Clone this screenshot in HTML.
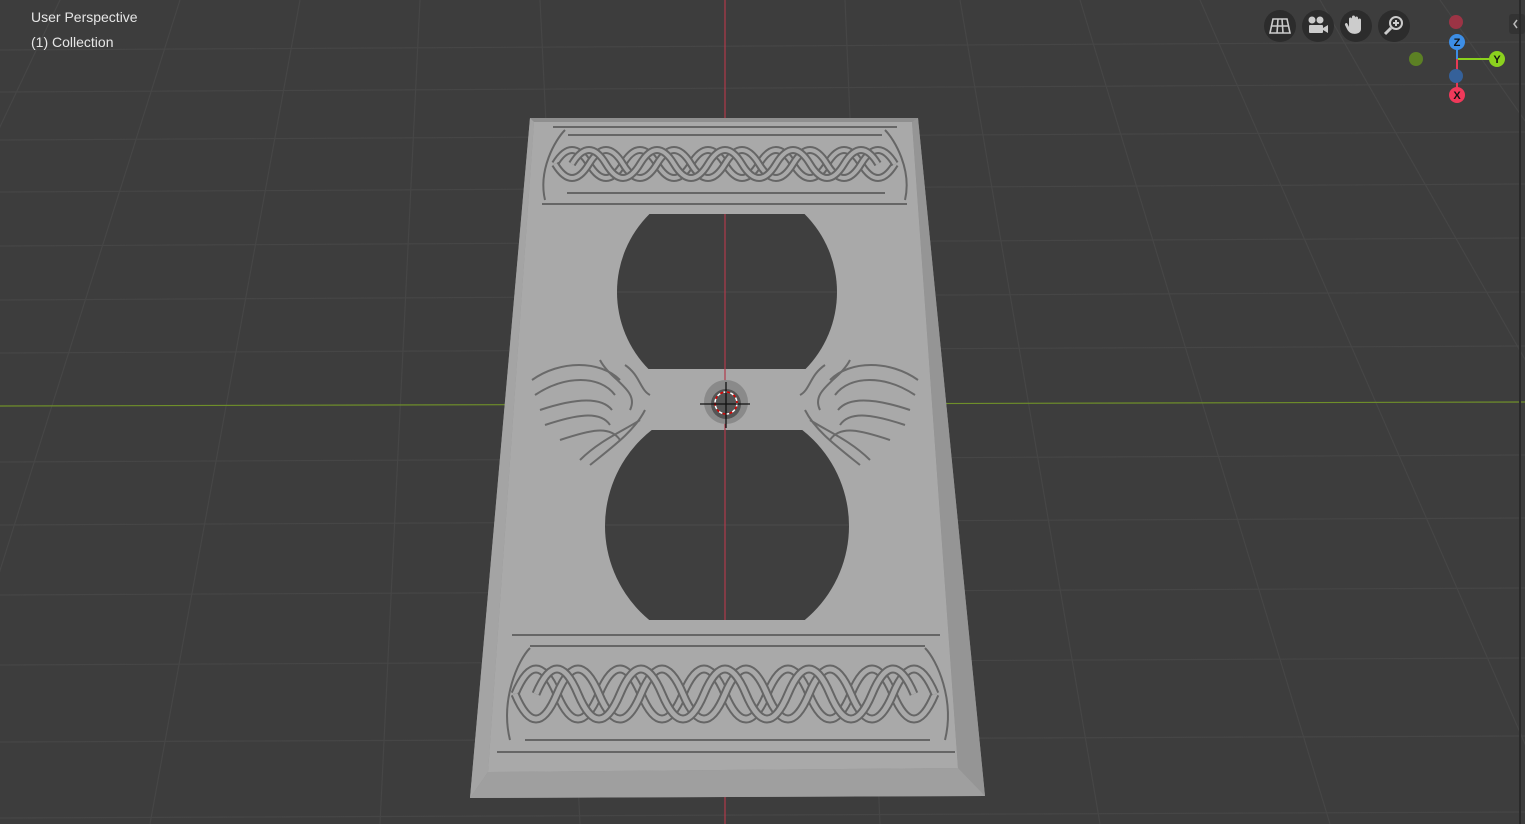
<!DOCTYPE html>
<html><head><meta charset="utf-8"><style>
html,body{margin:0;padding:0;width:1525px;height:824px;overflow:hidden;background:#3d3d3d;font-family:"Liberation Sans",sans-serif}
.t{position:absolute;left:31px;color:#e6e6e6;font-size:14px}
</style></head><body>
<svg width="1525" height="824" style="position:absolute;left:0;top:0">
<defs>
<path id="ta" d="M555 164 Q572 136 589 164 T623 164 T657 164 T691 164 T725 164 T759 164 T793 164 T827 164 T861 164 T895 164"/>
<path id="tb" d="M555 164 Q572 192 589 164 T623 164 T657 164 T691 164 T725 164 T759 164 T793 164 T827 164 T861 164 T895 164"/>
<path id="tc" d="M572 164 Q589 136 606 164 T640 164 T674 164 T708 164 T742 164 T776 164 T810 164 T844 164 T878 164"/>
<path id="ba" d="M515 694 Q536 644 557 694 T599 694 T641 694 T683 694 T725 694 T767 694 T809 694 T851 694 T893 694 T935 694"/>
<path id="bb" d="M515 694 Q536 744 557 694 T599 694 T641 694 T683 694 T725 694 T767 694 T809 694 T851 694 T893 694 T935 694"/>
<path id="bc" d="M536 694 Q557 644 578 694 T620 694 T662 694 T704 694 T746 694 T788 694 T830 694 T872 694 T914 694"/>
</defs>
<g stroke="#464646" stroke-width="1.2" fill="none">
<line x1="0" y1="50" x2="1525" y2="42"/>
<line x1="0" y1="92" x2="1525" y2="84"/>
<line x1="0" y1="140" x2="1525" y2="132"/>
<line x1="0" y1="192" x2="1525" y2="184"/>
<line x1="0" y1="246" x2="1525" y2="238"/>
<line x1="0" y1="300" x2="1525" y2="292"/>
<line x1="0" y1="353" x2="1525" y2="346"/>
<line x1="0" y1="462" x2="1525" y2="455"/>
<line x1="0" y1="525" x2="1525" y2="518"/>
<line x1="0" y1="595" x2="1525" y2="588"/>
<line x1="0" y1="665" x2="1525" y2="658"/>
<line x1="0" y1="742" x2="1525" y2="736"/>
<line x1="0" y1="818" x2="1525" y2="812"/>
<line x1="60" y1="0" x2="-330" y2="824"/>
<line x1="180" y1="0" x2="-80" y2="824"/>
<line x1="300" y1="0" x2="150" y2="824"/>
<line x1="420" y1="0" x2="380" y2="824"/>
<line x1="540" y1="0" x2="580" y2="824"/>
<line x1="845" y1="0" x2="880" y2="824"/>
<line x1="960" y1="0" x2="1100" y2="824"/>
<line x1="1080" y1="0" x2="1330" y2="824"/>
<line x1="1200" y1="0" x2="1560" y2="824"/>
<line x1="1320" y1="0" x2="1790" y2="824"/>
<line x1="1440" y1="0" x2="2020" y2="824"/>
</g>
<line x1="0" y1="406" x2="1525" y2="402" stroke="#6f8f2a" stroke-width="1.2"/>
<line x1="725" y1="0" x2="725" y2="824" stroke="#b03a4a" stroke-width="1.2"/>
<!-- plate -->
<polygon points="530,118 918,118 985,796 470,798" fill="#8f8f8f"/>
<polygon points="534,122 912,122 958,768 488,772" fill="#a9a9a9"/>
<polygon points="912,122 918,118 985,796 958,768" fill="#959595"/>
<polygon points="470,798 985,796 958,768 488,772" fill="#9f9f9f"/>
<polygon points="530,118 534,122 488,772 470,798" fill="#a4a4a4"/>
<!-- holes -->
<clipPath id="c1"><rect x="600" y="214" width="260" height="155"/></clipPath>
<circle cx="727" cy="292" r="110" fill="#3f3f3f" clip-path="url(#c1)"/>
<clipPath id="c2"><rect x="590" y="430" width="280" height="190"/></clipPath>
<circle cx="727" cy="526" r="122" fill="#3f3f3f" clip-path="url(#c2)"/>
<g stroke="#494949" stroke-width="1.2"><line x1="617" y1="292" x2="837" y2="292"/><line x1="605" y1="525" x2="849" y2="525"/></g>
<line x1="725" y1="214" x2="725" y2="620" stroke="#b03a4a" stroke-width="1.2"/>
<!-- top knot panel -->
<g fill="none" stroke="#666" stroke-width="2">
<line x1="553" y1="127" x2="897" y2="127"/>
<line x1="542" y1="204" x2="907" y2="204"/>
<line x1="568" y1="135" x2="882" y2="135"/>
<line x1="567" y1="193" x2="885" y2="193"/>
<path d="M545 200 C538 170,555 140,565 130"/><path d="M905 200 C912 170,895 140,885 130"/>
</g>
<g fill="none">
<use href="#ta" stroke="#666" stroke-width="8"/><use href="#ta" stroke="#a9a9a9" stroke-width="4"/>
<use href="#tb" stroke="#666" stroke-width="8"/><use href="#tb" stroke="#a9a9a9" stroke-width="4"/>
<use href="#tc" stroke="#666" stroke-width="8"/><use href="#tc" stroke="#a9a9a9" stroke-width="4"/>
</g>
<!-- bottom knot panel -->
<g fill="none" stroke="#666" stroke-width="2">
<line x1="512" y1="635" x2="940" y2="635"/>
<line x1="497" y1="752" x2="955" y2="752"/>
<line x1="530" y1="646" x2="925" y2="646"/>
<line x1="525" y1="740" x2="930" y2="740"/>
<path d="M510 740 C500 700,518 660,530 648"/><path d="M945 740 C955 700,937 660,925 648"/>
</g>
<g fill="none">
<use href="#ba" stroke="#666" stroke-width="9"/><use href="#ba" stroke="#a9a9a9" stroke-width="5"/>
<use href="#bb" stroke="#666" stroke-width="9"/><use href="#bb" stroke="#a9a9a9" stroke-width="5"/>
<use href="#bc" stroke="#666" stroke-width="9"/><use href="#bc" stroke="#a9a9a9" stroke-width="5"/>
</g>
<!-- wings -->
<g fill="none" stroke="#6a6a6a" stroke-width="2">
<path d="M532 380 C560 360,600 360,620 380"/><path d="M535 395 C565 375,600 375,615 395"/>
<path d="M540 410 C570 400,600 395,612 410"/><path d="M545 425 C575 415,600 410,610 425"/>
<path d="M560 440 C590 430,610 425,620 440"/><path d="M580 460 C600 440,625 430,640 420"/>
<path d="M600 360 C610 380,640 390,630 410"/><path d="M625 365 C640 375,640 390,650 395"/>
<path d="M590 465 C615 445,635 430,645 410"/>
<path d="M918 380 C890 360,850 360,830 380"/><path d="M915 395 C885 375,850 375,835 395"/>
<path d="M910 410 C880 400,850 395,838 410"/><path d="M905 425 C875 415,850 410,840 425"/>
<path d="M890 440 C860 430,840 425,830 440"/><path d="M870 460 C850 440,825 430,810 420"/>
<path d="M850 360 C840 380,810 390,820 410"/><path d="M825 365 C810 375,810 390,800 395"/>
<path d="M860 465 C835 445,815 430,805 410"/>
</g>
<!-- screw hole & cursor -->
<circle cx="726" cy="402" r="22" fill="#8a8a8a"/>
<circle cx="726" cy="404" r="15" fill="#555"/>
<circle cx="726" cy="403" r="11" fill="none" stroke="#fff" stroke-width="1.5" stroke-dasharray="4 3"/>
<circle cx="726" cy="403" r="11" fill="none" stroke="#d00" stroke-width="1.5" stroke-dasharray="3 4" stroke-dashoffset="3.5"/>
<line x1="700" y1="404" x2="750" y2="404" stroke="#111" stroke-width="1.3"/>
<line x1="726" y1="382" x2="726" y2="428" stroke="#111" stroke-width="1.3"/>
<!-- nav buttons -->
<g fill="#2c2c2c"><circle cx="1280" cy="26" r="16"/><circle cx="1318" cy="26" r="16"/><circle cx="1356" cy="26" r="16"/><circle cx="1394" cy="26" r="16"/></g>
<g fill="none" stroke="#ccc" stroke-width="1.6">
<path d="M1273 19 H1287 L1290 33 H1270 Z M1271 26 H1289 M1278 19 L1277 33 M1282 19 L1283 33"/>
</g>
<g fill="#ccc"><rect x="1309" y="25" width="14" height="8" rx="1"/><circle cx="1312" cy="20" r="3.5"/><circle cx="1320" cy="20" r="3.5"/><polygon points="1323,28 1328,25 1328,33 1323,30"/>
<path d="M1349 27 V19 a1.5 1.5 0 0 1 3 0 V17 a1.5 1.5 0 0 1 3 0 V18 a1.5 1.5 0 0 1 3 0 V20 a1.5 1.5 0 0 1 3 0 V29 C1361 35 1350 36 1347 29 L1345 25 a1.4 1.4 0 0 1 2.4 -1.4 Z"/></g>
<g fill="none" stroke="#ccc" stroke-width="2"><circle cx="1396" cy="23" r="6"/><line x1="1391" y1="28" x2="1385" y2="34" stroke-width="3"/><path d="M1396 20 V26 M1393 23 H1399"/></g>
<!-- axes gizmo -->
<line x1="1457" y1="59" x2="1497" y2="59" stroke="#8bd11e" stroke-width="2"/>
<line x1="1457" y1="59" x2="1457" y2="43" stroke="#3d8ee6" stroke-width="2"/>
<line x1="1457" y1="59" x2="1457" y2="95" stroke="#e63a55" stroke-width="2"/>
<circle cx="1456" cy="22" r="7" fill="#9c3445"/>
<circle cx="1416" cy="59" r="7" fill="#5c8024"/>
<circle cx="1456" cy="76" r="7" fill="#35619a"/>
<circle cx="1457" cy="42" r="8" fill="#3d8ee6"/>
<circle cx="1497" cy="59" r="8" fill="#8bd11e"/>
<circle cx="1457" cy="95" r="8" fill="#f0395a"/>
<g font-family="Liberation Sans" font-size="11" font-weight="bold" text-anchor="middle" fill="#111"><text x="1457" y="46">Z</text><text x="1497" y="63">Y</text><text x="1457" y="99">X</text></g>
<rect x="1509" y="14" width="16" height="20" rx="3" fill="#333"/>
<path d="M1517 20 L1514 24 L1517 28" fill="none" stroke="#bbb" stroke-width="1.5"/>
<line x1="1520" y1="0" x2="1520" y2="824" stroke="#2a2a2a" stroke-width="2"/>
</svg>
<div class="t" style="top:9px">User Perspective</div>
<div class="t" style="top:34px">(1) Collection</div>
</body></html>
